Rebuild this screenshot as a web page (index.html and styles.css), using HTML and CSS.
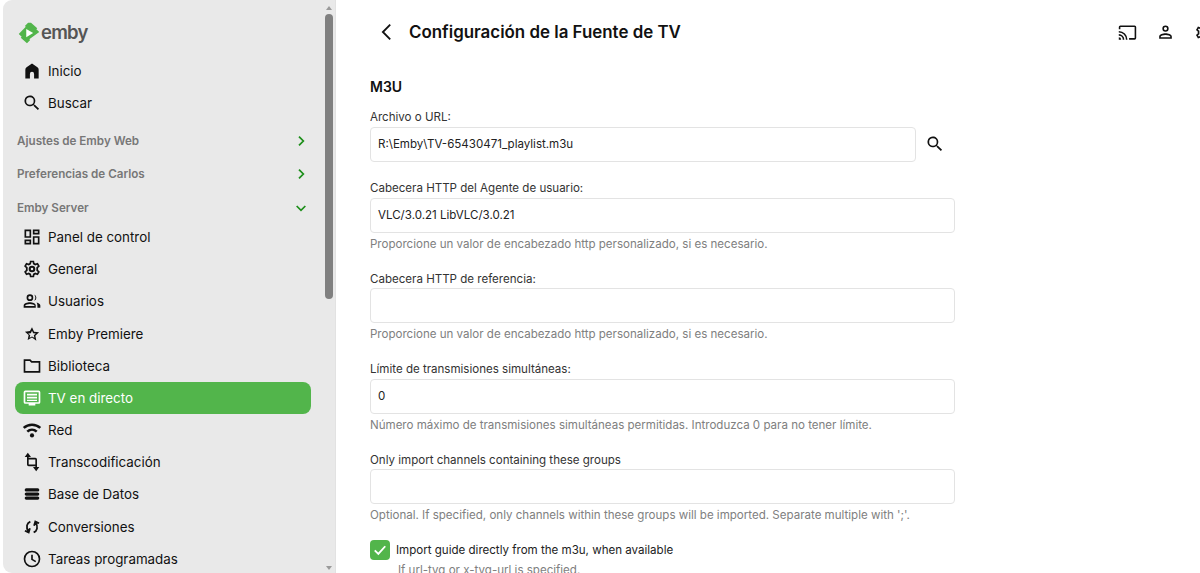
FILE: index.html
```html
<!DOCTYPE html>
<html lang="es">
<head>
<meta charset="utf-8">
<title>Configuración de la Fuente de TV</title>
<link rel="stylesheet" href="styles.css">
</head>
<body>
<div class="app">
  <aside class="drawer">
    <div class="drawer-scroll">
      <div class="logo">
        <svg class="logo-mark" viewBox="0 0 24 24" width="22" height="22"><path fill="#52b54b" d="M11 .8 7.500 4.300l1 1L.8 13l3.200 3.200-1 1L9.800 23.200l3.500-3.500-1-1L23.200 11l-3.200-3.200 1-1L14.200.8z"/><path fill="#fff" d="M9 7.500v9l7.500-4.500z"/></svg>
        <span class="logo-text">emby</span>
      </div>
      <nav class="nav-top">
        <a class="nav-item"><svg class="ic" viewBox="0 0 24 24"><path d="M12 3 5.500 7.500C4.500 8.300 4 9.300 4 10.500V21h5.500v-5.500a2.500 2.500 0 0 1 5 0V21H20V10.500c0-1.200-.5-2.200-1.500-3z"/></svg><span>Inicio</span></a>
        <a class="nav-item"><svg class="ic" viewBox="0 0 24 24"><path d="M15.500 14h-.8l-.3-.3A6.500 6.500 0 1 0 13.700 14.400l.3.3v.8l5 5 1.500-1.500zm-6 0a4.500 4.500 0 1 1 0-9 4.500 4.500 0 0 1 0 9z"/></svg><span>Buscar</span></a>
      </nav>
      <div class="section first"><span>Ajustes de Emby Web</span><svg class="chev" viewBox="0 0 24 24"><path d="m9 5.500 6.500 6.500L9 18.500"/></svg></div>
      <div class="section"><span>Preferencias de Carlos</span><svg class="chev" viewBox="0 0 24 24"><path d="m9 5.500 6.500 6.500L9 18.500"/></svg></div>
      <div class="section"><span>Emby Server</span><svg class="chev" viewBox="0 0 24 24"><path d="m5.500 9 6.500 6.500L18.500 9"/></svg></div>
      <nav class="nav-list">
        <a class="nav-item"><svg class="ic" viewBox="0 0 24 24"><path fill-rule="evenodd" d="M3 3h8v10H3zm2 2v6h4V5zM13 3h8v6h-8zm2 2v2h4V5zM13 11h8v10h-8zm2 2v6h4v-6zM3 15h8v6H3zm2 2v2h4v-2z"/></svg><span>Panel de control</span></a>
        <a class="nav-item"><svg class="ic" viewBox="0 0 24 24"><path fill-rule="evenodd" d="M9.500 2h5l.5 2.800 1.300.7L19 4.500l2.500 4.300-2.200 1.900v2.600l2.200 1.900L19 19.500l-2.700-1-1.300.7-.5 2.800h-5L9 19.200l-1.300-.7-2.700 1-2.500-4.300 2.200-1.900v-2.600L2.500 8.800 5 4.500l2.700 1L9 4.800zM11.200 4l-.4 2.200-2.600 1.500L6 6.900 5 8.400l1.800 1.500v4.200L5 15.600l1 1.500 2.200-.8 2.600 1.500.4 2.200h1.600l.4-2.200 2.600-1.500 2.200.8 1-1.500-1.800-1.500V9.900L19 8.400l-1-1.500-2.200.8-2.600-1.500-.4-2.200zM12 8a4 4 0 1 1 0 8 4 4 0 0 1 0-8z"/><circle cx="12" cy="12" r="1.500" fill="#e9e9e9"/></svg><span>General</span></a>
        <a class="nav-item"><svg class="ic" viewBox="0 0 24 24"><path fill-rule="evenodd" d="M9.500 4a4 4 0 1 1 0 8 4 4 0 0 1 0-8zm0 2a2 2 0 1 0 0 4 2 2 0 0 0 0-4zM9.500 13.500c3 0 7 1.500 7 3.800V20H2v-2.700c0-2.300 4.500-3.800 7.500-3.800zm0 2c-2.500 0-5.500 1.100-5.500 1.900v.6h11v-.6c0-.8-3-1.900-5.500-1.900zM14.500 4.200a4 4 0 0 1 0 7.600 6 6 0 0 0 0-7.600zM17.500 13.700c2.500.6 4.500 1.900 4.500 3.600V20h-3.500v-2.700c0-1.500-.4-2.600-1-3.600z"/></svg><span>Usuarios</span></a>
        <a class="nav-item"><svg class="ic" viewBox="-2 -2 28 28"><path fill-rule="evenodd" d="m12 2.500 2.900 6.400 7 .8-5.200 4.700 1.400 6.900L12 16.800l-6.100 3.500 1.400-6.900-5.200-4.700 7-.8zm0 4.900-1.600 3.400-3.700.4 2.800 2.500-.8 3.700 3.300-1.900 3.300 1.900-.8-3.700 2.800-2.500-3.700-.4z"/></svg><span>Emby Premiere</span></a>
        <a class="nav-item"><svg class="ic" viewBox="0 0 24 24"><path fill-rule="evenodd" d="M2 4h8l2 2h10v14H2zm2 2v12h16V8h-8.800l-2-2z"/></svg><span>Biblioteca</span></a>
        <a class="nav-item active"><svg class="ic" viewBox="0 0 24 24"><path fill-rule="evenodd" d="M4 3h16a2 2 0 0 1 2 2v12a2 2 0 0 1-2 2h-4v2H8v-2H4a2 2 0 0 1-2-2V5a2 2 0 0 1 2-2zm0 2v12h16V5zM6 7h12v2H6zm0 3.500h12v2H6zM6 14h12v1.500H6z"/></svg><span>TV en directo</span></a>
        <a class="nav-item"><svg class="ic" viewBox="0 0 24 24"><path d="M1 8.500a16 16 0 0 1 22 0l-2.100 2.100a13 13 0 0 0-17.800 0zM5.300 12.800a10 10 0 0 1 13.400 0l-2.100 2.100a7 7 0 0 0-9.200 0z"/><circle cx="12" cy="18.500" r="2.500"/></svg><span>Red</span></a>
        <a class="nav-item"><svg class="ic" viewBox="0 0 24 24"><path d="M7 1 3.200 6H6v9a2 2 0 0 0 2 2h8v1h-2.800l3.800 5 3.800-5H18V9a2 2 0 0 0-2-2H8V6h2.800zM8 9h8v6H8z"/></svg><span>Transcodificación</span></a>
        <a class="nav-item"><svg class="ic" viewBox="-2 -2 28 28"><path fill-rule="evenodd" d="M4 4h16a2 2 0 0 1 0 4.500H4A2 2 0 0 1 4 4zM4 9.800h16a2 2 0 0 1 0 4.500H4a2 2 0 0 1 0-4.500zM4 15.500h16a2 2 0 0 1 0 4.500H4a2 2 0 0 1 0-4.500z"/></svg><span>Base de Datos</span></a>
        <a class="nav-item"><svg class="ic-line" viewBox="0 0 24 24"><path d="M10 5.500C6 7 4 12 8 18M3.500 16.500l4.500 2 1.500-5M14 18.500C18 17 20 12 16 6M20.500 7.500l-4.500-2-1.500 5"/></svg><span>Conversiones</span></a>
        <a class="nav-item"><svg class="ic" viewBox="0 0 24 24"><path fill-rule="evenodd" d="M12 2a10 10 0 1 1 0 20 10 10 0 0 1 0-20zm0 2a8 8 0 1 0 0 16 8 8 0 0 0 0-16zM11 7h2v5l4 2.400-1 1.600-5-3z"/></svg><span>Tareas programadas</span></a>
      </nav>
    </div>
    <div class="scrollbar">
      <span class="arrow up"></span>
      <span class="thumb"></span>
      <span class="arrow down"></span>
    </div>
  </aside>
  <main class="main">
    <header class="topbar">
      <svg class="back" viewBox="0 0 24 24"><path d="M15.500 4 7.500 12l8 8"/></svg>
      <h1>Configuración de la Fuente de TV</h1>
      <div class="top-icons">
        <svg class="ic" viewBox="0 0 24 24"><path d="M21 3H3a2 2 0 0 0-2 2v3h2V5h18v14h-7v2h7a2 2 0 0 0 2-2V5a2 2 0 0 0-2-2zM1 18v3h3a3 3 0 0 0-3-3zm0-4v2a5 5 0 0 1 5 5h2a7 7 0 0 0-7-7zm0-4v2a9 9 0 0 1 9 9h2A11 11 0 0 0 1 10z"/></svg>
        <svg class="ic" viewBox="0 0 24 24"><path fill-rule="evenodd" d="M12 3a4 4 0 1 1 0 8 4 4 0 0 1 0-8zm0 2a2 2 0 1 0 0 4 2 2 0 0 0 0-4zM12 13c3 0 8 1.300 8 4v3H4v-3c0-2.700 5-4 8-4zm0 2c-3 0-6 1.200-6 2v1h12v-1c0-.8-3-2-6-2z"/></svg>
        <svg class="ic" viewBox="0 0 24 24"><path fill-rule="evenodd" d="M9.500 2h5l.5 2.800 1.300.7L19 4.500l2.500 4.300-2.200 1.900v2.600l2.200 1.900L19 19.500l-2.700-1-1.300.7-.5 2.800h-5L9 19.200l-1.300-.7-2.700 1-2.500-4.300 2.200-1.900v-2.600L2.500 8.800 5 4.500l2.700 1L9 4.800zM11.200 4l-.4 2.200-2.600 1.500L6 6.900 5 8.400l1.800 1.500v4.200L5 15.600l1 1.500 2.200-.8 2.600 1.500.4 2.200h1.600l.4-2.200 2.600-1.500 2.200.8 1-1.500-1.800-1.500V9.900L19 8.400l-1-1.500-2.200.8-2.600-1.500-.4-2.200z"/></svg>
      </div>
    </header>
    <form class="form">
      <h2>M3U</h2>
      <div class="field field-first">
        <label>Archivo o URL:</label>
        <div class="with-btn">
          <div class="input">R:\Emby\TV-65430471_playlist.m3u</div>
          <svg class="ic search" viewBox="0 0 24 24"><path d="M15.500 14h-.8l-.3-.3A6.500 6.500 0 1 0 13.700 14.400l.3.3v.8l5 5 1.500-1.500zm-6 0a4.500 4.500 0 1 1 0-9 4.500 4.500 0 0 1 0 9z"/></svg>
        </div>
      </div>
      <div class="field">
        <label>Cabecera HTTP del Agente de usuario:</label>
        <div class="input">VLC/3.0.21 LibVLC/3.0.21</div>
        <p class="help">Proporcione un valor de encabezado http personalizado, si es necesario.</p>
      </div>
      <div class="field">
        <label>Cabecera HTTP de referencia:</label>
        <div class="input"></div>
        <p class="help">Proporcione un valor de encabezado http personalizado, si es necesario.</p>
      </div>
      <div class="field">
        <label>Límite de transmisiones simultáneas:</label>
        <div class="input">0</div>
        <p class="help">Número máximo de transmisiones simultáneas permitidas. Introduzca 0 para no tener límite.</p>
      </div>
      <div class="field">
        <label>Only import channels containing these groups</label>
        <div class="input"></div>
        <p class="help">Optional. If specified, only channels within these groups will be imported. Separate multiple with ';'.</p>
      </div>
      <div class="check">
        <span class="box"><svg viewBox="0 0 24 24"><path d="m5 12.500 4.800 4.800L19 7"/></svg></span>
        <span>Import guide directly from the m3u, when available</span>
      </div>
      <p class="help check-help">If url-tvg or x-tvg-url is specified.</p>
    </form>
  </main>
</div>
</body>
</html>
```
FILE: styles.css
```css
* { box-sizing: border-box; }
html, body { margin: 0; height: 100%; overflow: hidden; background: #fff; }
body { font-family: Inter, "Liberation Sans", sans-serif; color: #111; }
.app { display: flex; height: 573px; overflow: hidden; }

.drawer {
  width: 333px; margin-left: 3px; height: 573px; flex: none;
  background: #e9e9e9; border-radius: 9px 0 0 9px;
  display: flex; overflow: hidden; border-right: 1px solid #e2e2e2;
}
.drawer-scroll { width: 321px; padding: 0 13px 0 12px; flex: none; }
.scrollbar { width: 8px; margin-left: 1px; display: flex; flex-direction: column; align-items: center; height: 573px; padding-top: 6px; }
.thumb { width: 8px; height: 285px; margin-top: 4px; background: #808080; border-radius: 4px; }
.arrow { width: 0; height: 0; border-left: 3px solid transparent; border-right: 3px solid transparent; }
.arrow.up { border-bottom: 4px solid #9a9a9a; }
.arrow.down { border-top: 4px solid #9a9a9a; margin-top: auto; margin-bottom: 3px; }

.logo { display: flex; align-items: center; height: 24px; margin: 21px 0 0 3px; gap: 1px; }
.logo-mark { flex: none; }
.logo-text { font-size: 18.500px; font-weight: 600; color: #555; letter-spacing: -0.8px; line-height: 24px; position: relative; top: -1px; }

.nav-top { margin-top: 10px; }
.nav-item {
  display: flex; align-items: center; height: 32.2px; padding-left: 7px;
  font-size: 13.370px; color: #111; gap: 6px; border-radius: 8px;
}
.ic { width: 15px; height: 15px; fill: #111; flex: none; }
.nav-item .ic { width: 20px; height: 20px; }
.ic-line { width: 20px; height: 20px; flex: none; fill: none; stroke: #111; stroke-width: 2.200; }
.nav-item.active { background: #52b54b; color: #fff; }
.nav-item.active .ic { fill: #fff; }

.section {
  display: flex; align-items: center; justify-content: space-between;
  height: 33.700px; padding: 0 1px 0 2px;
  font-size: 11.650px; font-weight: 600; color: #777;
}
.section.first { margin-top: 4.500px; }
.chev { width: 16px; height: 16px; margin-right: 1px; fill: none; stroke: #1d8f1a; stroke-width: 2.600; }
.nav-list { margin-top: -4.100px; }

.main { flex: 1; padding: 0 0 0 34px; min-width: 0; overflow: hidden; }
.topbar { display: flex; align-items: center; height: 24px; margin-top: 20px; position: relative; }
.back { width: 22px; height: 22px; fill: none; stroke: #111; stroke-width: 2; flex: none; margin-left: 6px; }
h1 { margin: 0 0 0 11px; font-size: 16.900px; font-weight: 600; color: #111; white-space: nowrap; }
.top-icons { position: absolute; left: 748px; top: 3px; display: flex; gap: 19px; width: 200px; }
.top-icons .ic { width: 19px; height: 19px; }

.form { width: 585px; margin-top: 34px; }
h2 { margin: 0; font-size: 14px; font-weight: 600; line-height: 18px; color: #111; }
.field { margin-top: 20px; }
.field.field-first { margin: 14px 0 -0.500px; }
.field label { display: block; font-size: 11.560px; line-height: 15px; color: #333; margin-bottom: 1.500px; }
.input {
  height: 35px; border: 1px solid #e3e3e3; border-radius: 4px; background: #fff;
  padding: 0 7px; font-size: 11.560px; line-height: 33px; color: #222; flex: 1;
}
.with-btn { display: flex; align-items: center; gap: 9px; }
.search { width: 20px; height: 20px; margin-right: 10px; }
.help { margin: 4px 0 0; font-size: 11.560px; line-height: 15px; color: #808080; white-space: nowrap; }
.check { display: flex; align-items: center; gap: 6px; margin-top: 16px; font-size: 11.560px; color: #222; height: 21px; }
.box { width: 20px; height: 20px; background: #52b54b; border-radius: 4px; display: flex; align-items: center; justify-content: center; }
.box svg { width: 18px; height: 18px; fill: none; stroke: #fff; stroke-width: 2.500; }
.check-help { margin: 3px 0 0 28px; }
```
